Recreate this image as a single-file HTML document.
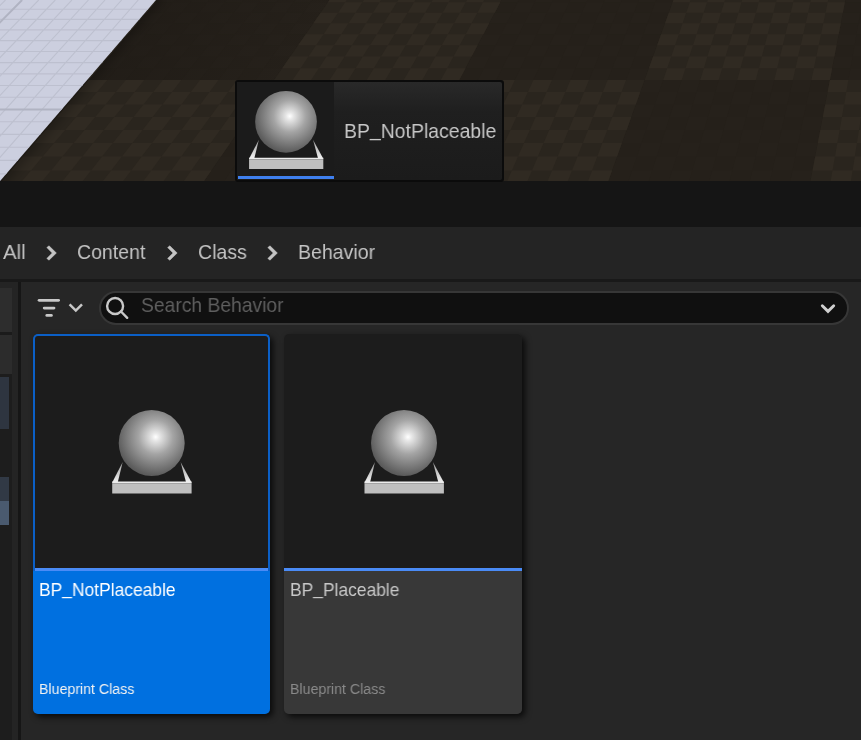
<!DOCTYPE html>
<html><head><meta charset="utf-8">
<style>
*{margin:0;padding:0;box-sizing:border-box}
html,body{width:861px;height:740px;overflow:hidden;background:#262626;font-family:"Liberation Sans",sans-serif}
.a{position:absolute}
#vp{position:absolute;left:0;top:0;width:861px;height:181px;overflow:hidden}
.t{position:absolute;white-space:nowrap;line-height:1;transform-origin:0 0;will-change:transform}
</style></head><body>
<svg id="vp" width="861" height="181" viewBox="0 0 861 181">
<rect width="861" height="181" fill="#25201a"/>
<path d="M-26.9,104.4 L-8.0,104.4 L3.4,92.1 L-15.3,92.1ZM-19.7,117.0 L-0.5,117.0 L10.9,104.4 L-8.0,104.4ZM3.4,92.1 L22.2,92.1 L33.2,80.0 L14.6,80.0ZM-12.3,129.9 L7.1,129.9 L18.6,117.0 L-0.5,117.0ZM10.9,104.4 L29.9,104.4 L40.9,92.1 L22.2,92.1ZM-29.1,170.4 L-9.0,170.4 L3.1,156.6 L-16.7,156.6ZM-4.7,143.1 L14.9,143.1 L26.5,129.9 L7.1,129.9ZM18.6,117.0 L37.8,117.0 L48.8,104.4 L29.9,104.4ZM40.9,92.1 L59.6,92.1 L70.2,80.0 L51.7,80.0ZM-21.4,184.6 L-1.2,184.6 L11.0,170.4 L-9.0,170.4ZM3.1,156.6 L22.9,156.6 L34.5,143.1 L14.9,143.1ZM26.5,129.9 L45.8,129.9 L56.9,117.0 L37.8,117.0ZM48.8,104.4 L67.8,104.4 L78.4,92.1 L59.6,92.1ZM211.4,170.4 L231.4,170.4 L240.7,156.6 L220.9,156.6ZM230.3,143.1 L249.9,143.1 L258.8,129.9 L239.4,129.9ZM248.4,117.0 L267.5,117.0 L276.1,104.4 L257.1,104.4ZM265.7,92.1 L284.4,92.1 L292.6,80.0 L274.0,80.0ZM221.8,184.6 L242.1,184.6 L251.4,170.4 L231.4,170.4ZM240.7,156.6 L260.6,156.6 L269.5,143.1 L249.9,143.1ZM258.8,129.9 L278.2,129.9 L286.7,117.0 L267.5,117.0ZM276.1,104.4 L295.0,104.4 L303.1,92.1 L284.4,92.1ZM251.4,170.4 L271.5,170.4 L280.4,156.6 L260.6,156.6ZM269.5,143.1 L289.0,143.1 L297.5,129.9 L278.2,129.9ZM286.7,117.0 L305.8,117.0 L313.9,104.4 L295.0,104.4ZM303.1,92.1 L321.9,92.1 L329.6,80.0 L311.1,80.0ZM262.4,184.6 L282.7,184.6 L291.5,170.4 L271.5,170.4ZM280.4,156.6 L300.2,156.6 L308.6,143.1 L289.0,143.1ZM297.5,129.9 L316.9,129.9 L325.0,117.0 L305.8,117.0ZM313.9,104.4 L332.9,104.4 L340.6,92.1 L321.9,92.1ZM291.5,170.4 L311.6,170.4 L320.0,156.6 L300.2,156.6ZM308.6,143.1 L328.2,143.1 L336.2,129.9 L316.9,129.9ZM325.0,117.0 L344.1,117.0 L351.8,104.4 L332.9,104.4ZM340.6,92.1 L359.3,92.1 L366.7,80.0 L348.2,80.0ZM302.9,184.6 L323.2,184.6 L331.6,170.4 L311.6,170.4ZM320.0,156.6 L339.8,156.6 L347.8,143.1 L328.2,143.1ZM336.2,129.9 L355.6,129.9 L363.3,117.0 L344.1,117.0ZM351.8,104.4 L370.7,104.4 L378.1,92.1 L359.3,92.1ZM331.6,170.4 L351.6,170.4 L359.6,156.6 L339.8,156.6ZM347.8,143.1 L367.4,143.1 L375.0,129.9 L355.6,129.9ZM363.3,117.0 L382.4,117.0 L389.7,104.4 L370.7,104.4ZM378.1,92.1 L396.8,92.1 L403.7,80.0 L385.2,80.0ZM343.5,184.6 L363.8,184.6 L371.7,170.4 L351.6,170.4ZM359.6,156.6 L379.4,156.6 L386.9,143.1 L367.4,143.1ZM375.0,129.9 L394.3,129.9 L401.6,117.0 L382.4,117.0ZM389.7,104.4 L408.6,104.4 L415.5,92.1 L396.8,92.1ZM371.7,170.4 L391.7,170.4 L399.2,156.6 L379.4,156.6ZM386.9,143.1 L406.5,143.1 L413.7,129.9 L394.3,129.9ZM401.6,117.0 L420.7,117.0 L427.5,104.4 L408.6,104.4ZM415.5,92.1 L434.2,92.1 L440.8,80.0 L422.3,80.0ZM384.0,184.6 L404.3,184.6 L411.7,170.4 L391.7,170.4ZM399.2,156.6 L419.0,156.6 L426.1,143.1 L406.5,143.1ZM413.7,129.9 L433.1,129.9 L439.8,117.0 L420.7,117.0ZM427.5,104.4 L446.5,104.4 L453.0,92.1 L434.2,92.1ZM612.1,170.4 L632.2,170.4 L636.9,156.6 L617.1,156.6ZM621.9,143.1 L641.5,143.1 L646.0,129.9 L626.7,129.9ZM631.3,117.0 L650.5,117.0 L654.8,104.4 L635.8,104.4ZM640.3,92.1 L659.0,92.1 L663.2,80.0 L644.6,80.0ZM627.3,184.6 L647.6,184.6 L652.2,170.4 L632.2,170.4ZM636.9,156.6 L656.7,156.6 L661.1,143.1 L641.5,143.1ZM646.0,129.9 L665.4,129.9 L669.6,117.0 L650.5,117.0ZM654.8,104.4 L673.7,104.4 L677.7,92.1 L659.0,92.1ZM652.2,170.4 L672.2,170.4 L676.5,156.6 L656.7,156.6ZM661.1,143.1 L680.7,143.1 L684.8,129.9 L665.4,129.9ZM669.6,117.0 L688.8,117.0 L692.7,104.4 L673.7,104.4ZM677.7,92.1 L696.5,92.1 L700.2,80.0 L681.7,80.0ZM667.9,184.6 L688.1,184.6 L692.3,170.4 L672.2,170.4ZM676.5,156.6 L696.3,156.6 L700.3,143.1 L680.7,143.1ZM684.8,129.9 L704.1,129.9 L707.9,117.0 L688.8,117.0ZM692.7,104.4 L711.6,104.4 L715.2,92.1 L696.5,92.1ZM692.3,170.4 L712.3,170.4 L716.1,156.6 L696.3,156.6ZM700.3,143.1 L719.8,143.1 L723.5,129.9 L704.1,129.9ZM707.9,117.0 L727.0,117.0 L730.5,104.4 L711.6,104.4ZM715.2,92.1 L733.9,92.1 L737.3,80.0 L718.7,80.0ZM708.4,184.6 L728.7,184.6 L732.3,170.4 L712.3,170.4ZM716.1,156.6 L735.9,156.6 L739.4,143.1 L719.8,143.1ZM723.5,129.9 L742.8,129.9 L746.2,117.0 L727.0,117.0ZM730.5,104.4 L749.5,104.4 L752.7,92.1 L733.9,92.1ZM732.3,170.4 L752.4,170.4 L755.7,156.6 L735.9,156.6ZM739.4,143.1 L759.0,143.1 L762.2,129.9 L742.8,129.9ZM746.2,117.0 L765.3,117.0 L768.4,104.4 L749.5,104.4ZM752.7,92.1 L771.4,92.1 L774.3,80.0 L755.8,80.0ZM748.9,184.6 L769.2,184.6 L772.4,170.4 L752.4,170.4ZM755.7,156.6 L775.5,156.6 L778.6,143.1 L759.0,143.1ZM762.2,129.9 L781.6,129.9 L784.5,117.0 L765.3,117.0ZM768.4,104.4 L787.3,104.4 L790.1,92.1 L771.4,92.1ZM772.4,170.4 L792.5,170.4 L795.3,156.6 L775.5,156.6ZM778.6,143.1 L798.2,143.1 L800.9,129.9 L781.6,129.9ZM784.5,117.0 L803.6,117.0 L806.3,104.4 L787.3,104.4ZM790.1,92.1 L808.9,92.1 L811.4,80.0 L792.9,80.0ZM789.5,184.6 L809.8,184.6 L812.5,170.4 L792.5,170.4ZM795.3,156.6 L815.2,156.6 L817.8,143.1 L798.2,143.1ZM800.9,129.9 L820.3,129.9 L822.8,117.0 L803.6,117.0ZM806.3,104.4 L825.2,104.4 L827.6,92.1 L808.9,92.1ZM98.9,68.2 L117.2,68.2 L127.0,56.6 L108.9,56.6ZM118.6,45.3 L136.6,45.3 L145.9,34.2 L128.1,34.2ZM137.5,23.3 L155.1,23.3 L164.1,12.7 L146.6,12.7ZM155.6,2.2 L172.9,2.2 L181.5,-8.0 L164.4,-8.0ZM107.3,80.0 L125.8,80.0 L135.6,68.2 L117.2,68.2ZM127.0,56.6 L145.1,56.6 L154.5,45.3 L136.6,45.3ZM145.9,34.2 L163.7,34.2 L172.7,23.3 L155.1,23.3ZM164.1,12.7 L181.5,12.7 L190.1,2.2 L172.9,2.2ZM135.6,68.2 L153.9,68.2 L163.3,56.6 L145.1,56.6ZM154.5,45.3 L172.5,45.3 L181.4,34.2 L163.7,34.2ZM172.7,23.3 L190.2,23.3 L198.9,12.7 L181.5,12.7ZM190.1,2.2 L207.3,2.2 L215.6,-8.0 L198.5,-8.0ZM144.3,80.0 L162.9,80.0 L172.2,68.2 L153.9,68.2ZM163.3,56.6 L181.4,56.6 L190.4,45.3 L172.5,45.3ZM181.4,34.2 L199.2,34.2 L207.8,23.3 L190.2,23.3ZM198.9,12.7 L216.3,12.7 L224.5,2.2 L207.3,2.2ZM172.2,68.2 L190.6,68.2 L199.6,56.6 L181.4,56.6ZM190.4,45.3 L208.4,45.3 L217.0,34.2 L199.2,34.2ZM207.8,23.3 L225.4,23.3 L233.7,12.7 L216.3,12.7ZM224.5,2.2 L241.8,2.2 L249.7,-8.0 L232.7,-8.0ZM181.4,80.0 L199.9,80.0 L208.9,68.2 L190.6,68.2ZM199.6,56.6 L217.7,56.6 L226.3,45.3 L208.4,45.3ZM217.0,34.2 L234.7,34.2 L243.0,23.3 L225.4,23.3ZM233.7,12.7 L251.1,12.7 L259.0,2.2 L241.8,2.2ZM208.9,68.2 L227.2,68.2 L235.8,56.6 L217.7,56.6ZM226.3,45.3 L244.3,45.3 L252.5,34.2 L234.7,34.2ZM243.0,23.3 L260.6,23.3 L268.5,12.7 L251.1,12.7ZM259.0,2.2 L276.2,2.2 L283.8,-8.0 L266.8,-8.0ZM218.5,80.0 L237.0,80.0 L245.6,68.2 L227.2,68.2ZM235.8,56.6 L254.0,56.6 L262.2,45.3 L244.3,45.3ZM252.5,34.2 L270.3,34.2 L278.2,23.3 L260.6,23.3ZM268.5,12.7 L285.9,12.7 L293.5,2.2 L276.2,2.2ZM245.6,68.2 L263.9,68.2 L272.1,56.6 L254.0,56.6ZM262.2,45.3 L280.2,45.3 L288.0,34.2 L270.3,34.2ZM278.2,23.3 L295.7,23.3 L303.3,12.7 L285.9,12.7ZM293.5,2.2 L310.7,2.2 L318.0,-8.0 L300.9,-8.0ZM255.5,80.0 L274.0,80.0 L282.2,68.2 L263.9,68.2ZM272.1,56.6 L290.3,56.6 L298.1,45.3 L280.2,45.3ZM288.0,34.2 L305.8,34.2 L313.3,23.3 L295.7,23.3ZM303.3,12.7 L320.7,12.7 L327.9,2.2 L310.7,2.2ZM465.6,68.2 L483.9,68.2 L489.8,56.6 L471.6,56.6ZM477.6,45.3 L495.6,45.3 L501.2,34.2 L483.4,34.2ZM489.2,23.3 L506.7,23.3 L512.2,12.7 L494.8,12.7ZM500.3,2.2 L517.5,2.2 L522.7,-8.0 L505.6,-8.0ZM477.9,80.0 L496.4,80.0 L502.2,68.2 L483.9,68.2ZM489.8,56.6 L507.9,56.6 L513.5,45.3 L495.6,45.3ZM501.2,34.2 L519.0,34.2 L524.3,23.3 L506.7,23.3ZM512.2,12.7 L529.6,12.7 L534.7,2.2 L517.5,2.2ZM502.2,68.2 L520.5,68.2 L526.1,56.6 L507.9,56.6ZM513.5,45.3 L531.5,45.3 L536.7,34.2 L519.0,34.2ZM524.3,23.3 L541.9,23.3 L547.0,12.7 L529.6,12.7ZM534.7,2.2 L552.0,2.2 L556.8,-8.0 L539.8,-8.0ZM514.9,80.0 L533.4,80.0 L538.9,68.2 L520.5,68.2ZM526.1,56.6 L544.2,56.6 L549.4,45.3 L531.5,45.3ZM536.7,34.2 L554.5,34.2 L559.5,23.3 L541.9,23.3ZM547.0,12.7 L564.4,12.7 L569.2,2.2 L552.0,2.2ZM538.9,68.2 L557.2,68.2 L562.3,56.6 L544.2,56.6ZM549.4,45.3 L567.4,45.3 L572.3,34.2 L554.5,34.2ZM559.5,23.3 L577.1,23.3 L581.8,12.7 L564.4,12.7ZM569.2,2.2 L586.4,2.2 L591.0,-8.0 L573.9,-8.0ZM552.0,80.0 L570.5,80.0 L575.5,68.2 L557.2,68.2ZM562.3,56.6 L580.5,56.6 L585.3,45.3 L567.4,45.3ZM572.3,34.2 L590.0,34.2 L594.7,23.3 L577.1,23.3ZM581.8,12.7 L599.2,12.7 L603.7,2.2 L586.4,2.2ZM575.5,68.2 L593.9,68.2 L598.6,56.6 L580.5,56.6ZM585.3,45.3 L603.3,45.3 L607.8,34.2 L590.0,34.2ZM594.7,23.3 L612.3,23.3 L616.6,12.7 L599.2,12.7ZM603.7,2.2 L620.9,2.2 L625.1,-8.0 L608.0,-8.0ZM589.0,80.0 L607.6,80.0 L612.2,68.2 L593.9,68.2ZM598.6,56.6 L616.8,56.6 L621.2,45.3 L603.3,45.3ZM607.8,34.2 L625.6,34.2 L629.8,23.3 L612.3,23.3ZM616.6,12.7 L634.0,12.7 L638.1,2.2 L620.9,2.2ZM612.2,68.2 L630.5,68.2 L634.9,56.6 L616.8,56.6ZM621.2,45.3 L639.2,45.3 L643.3,34.2 L625.6,34.2ZM629.8,23.3 L647.4,23.3 L651.4,12.7 L634.0,12.7ZM638.1,2.2 L655.3,2.2 L659.2,-8.0 L642.1,-8.0ZM626.1,80.0 L644.6,80.0 L648.9,68.2 L630.5,68.2ZM634.9,56.6 L653.0,56.6 L657.1,45.3 L639.2,45.3ZM643.3,34.2 L661.1,34.2 L665.0,23.3 L647.4,23.3ZM651.4,12.7 L668.8,12.7 L672.6,2.2 L655.3,2.2ZM832.2,68.2 L850.5,68.2 L852.6,56.6 L834.4,56.6ZM836.6,45.3 L854.6,45.3 L856.5,34.2 L838.7,34.2ZM840.8,23.3 L858.4,23.3 L860.3,12.7 L842.9,12.7ZM844.9,2.2 L862.1,2.2 L863.9,-8.0 L846.9,-8.0ZM848.4,80.0 L867.0,80.0 L868.9,68.2 L850.5,68.2ZM852.6,56.6 L870.7,56.6 L872.5,45.3 L854.6,45.3ZM856.5,34.2 L874.3,34.2 L876.0,23.3 L858.4,23.3ZM860.3,12.7 L877.7,12.7 L879.4,2.2 L862.1,2.2Z" fill="#26211b"/>
<path d="M-26.3,213.9 L181.3,213.9 L274.0,80.0 L88.8,80.0ZM388.9,213.9 L596.5,213.9 L644.6,80.0 L459.3,80.0ZM804.1,213.9 L1011.7,213.9 L1015.2,80.0 L829.9,80.0ZM-96.5,80.0 L88.8,80.0 L181.5,-27.9 L14.2,-27.9ZM274.0,80.0 L459.3,80.0 L516.1,-27.9 L348.8,-27.9ZM644.6,80.0 L829.9,80.0 L850.7,-27.9 L683.4,-27.9ZM1015.2,80.0 L1200.5,80.0 L1185.3,-27.9 L1018.0,-27.9ZM181.5,-27.9 L348.8,-27.9 L410.3,-116.6 L257.8,-116.6ZM516.1,-27.9 L683.4,-27.9 L715.3,-116.6 L562.8,-116.6ZM850.7,-27.9 L1018.0,-27.9 L1020.3,-116.6 L867.8,-116.6Z" fill="#2a251e"/>
<path d="M11.0,170.4 L31.0,170.4 L42.7,156.6 L22.9,156.6ZM34.5,143.1 L54.1,143.1 L65.2,129.9 L45.8,129.9ZM56.9,117.0 L76.1,117.0 L86.7,104.4 L67.8,104.4ZM78.4,92.1 L97.1,92.1 L107.3,80.0 L88.8,80.0ZM19.1,184.6 L39.4,184.6 L51.1,170.4 L31.0,170.4ZM42.7,156.6 L62.5,156.6 L73.6,143.1 L54.1,143.1ZM65.2,129.9 L84.5,129.9 L95.2,117.0 L76.1,117.0ZM86.7,104.4 L105.6,104.4 L115.8,92.1 L97.1,92.1ZM51.1,170.4 L71.1,170.4 L82.3,156.6 L62.5,156.6ZM73.6,143.1 L93.2,143.1 L103.9,129.9 L84.5,129.9ZM95.2,117.0 L114.3,117.0 L124.6,104.4 L105.6,104.4ZM115.8,92.1 L134.6,92.1 L144.3,80.0 L125.8,80.0ZM59.7,184.6 L79.9,184.6 L91.1,170.4 L71.1,170.4ZM82.3,156.6 L102.1,156.6 L112.8,143.1 L93.2,143.1ZM103.9,129.9 L123.3,129.9 L133.5,117.0 L114.3,117.0ZM124.6,104.4 L143.5,104.4 L153.3,92.1 L134.6,92.1ZM91.1,170.4 L111.2,170.4 L121.9,156.6 L102.1,156.6ZM112.8,143.1 L132.4,143.1 L142.6,129.9 L123.3,129.9ZM133.5,117.0 L152.6,117.0 L162.4,104.4 L143.5,104.4ZM153.3,92.1 L172.0,92.1 L181.4,80.0 L162.9,80.0ZM100.2,184.6 L120.5,184.6 L131.2,170.4 L111.2,170.4ZM121.9,156.6 L141.7,156.6 L152.0,143.1 L132.4,143.1ZM142.6,129.9 L162.0,129.9 L171.8,117.0 L152.6,117.0ZM162.4,104.4 L181.4,104.4 L190.8,92.1 L172.0,92.1ZM131.2,170.4 L151.3,170.4 L161.5,156.6 L141.7,156.6ZM152.0,143.1 L171.5,143.1 L181.4,129.9 L162.0,129.9ZM171.8,117.0 L190.9,117.0 L200.3,104.4 L181.4,104.4ZM190.8,92.1 L209.5,92.1 L218.5,80.0 L199.9,80.0ZM140.8,184.6 L161.0,184.6 L171.3,170.4 L151.3,170.4ZM161.5,156.6 L181.3,156.6 L191.1,143.1 L171.5,143.1ZM181.4,129.9 L200.7,129.9 L210.1,117.0 L190.9,117.0ZM200.3,104.4 L219.2,104.4 L228.2,92.1 L209.5,92.1ZM171.3,170.4 L191.3,170.4 L201.1,156.6 L181.3,156.6ZM191.1,143.1 L210.7,143.1 L220.1,129.9 L200.7,129.9ZM210.1,117.0 L229.2,117.0 L238.2,104.4 L219.2,104.4ZM228.2,92.1 L246.9,92.1 L255.5,80.0 L237.0,80.0ZM181.3,184.6 L201.6,184.6 L211.4,170.4 L191.3,170.4ZM201.1,156.6 L220.9,156.6 L230.3,143.1 L210.7,143.1ZM220.1,129.9 L239.4,129.9 L248.4,117.0 L229.2,117.0ZM238.2,104.4 L257.1,104.4 L265.7,92.1 L246.9,92.1ZM411.7,170.4 L431.8,170.4 L438.8,156.6 L419.0,156.6ZM426.1,143.1 L445.7,143.1 L452.4,129.9 L433.1,129.9ZM439.8,117.0 L459.0,117.0 L465.4,104.4 L446.5,104.4ZM453.0,92.1 L471.7,92.1 L477.9,80.0 L459.3,80.0ZM424.6,184.6 L444.9,184.6 L451.8,170.4 L431.8,170.4ZM438.8,156.6 L458.6,156.6 L465.3,143.1 L445.7,143.1ZM452.4,129.9 L471.8,129.9 L478.1,117.0 L459.0,117.0ZM465.4,104.4 L484.4,104.4 L490.4,92.1 L471.7,92.1ZM451.8,170.4 L471.9,170.4 L478.4,156.6 L458.6,156.6ZM465.3,143.1 L484.9,143.1 L491.1,129.9 L471.8,129.9ZM478.1,117.0 L497.3,117.0 L503.3,104.4 L484.4,104.4ZM490.4,92.1 L509.2,92.1 L514.9,80.0 L496.4,80.0ZM465.1,184.6 L485.4,184.6 L491.9,170.4 L471.9,170.4ZM478.4,156.6 L498.2,156.6 L504.4,143.1 L484.9,143.1ZM491.1,129.9 L510.5,129.9 L516.4,117.0 L497.3,117.0ZM503.3,104.4 L522.2,104.4 L527.9,92.1 L509.2,92.1ZM491.9,170.4 L511.9,170.4 L518.0,156.6 L498.2,156.6ZM504.4,143.1 L524.0,143.1 L529.9,129.9 L510.5,129.9ZM516.4,117.0 L535.6,117.0 L541.2,104.4 L522.2,104.4ZM527.9,92.1 L546.6,92.1 L552.0,80.0 L533.4,80.0ZM505.7,184.6 L525.9,184.6 L532.0,170.4 L511.9,170.4ZM518.0,156.6 L537.9,156.6 L543.6,143.1 L524.0,143.1ZM529.9,129.9 L549.2,129.9 L554.7,117.0 L535.6,117.0ZM541.2,104.4 L560.1,104.4 L565.4,92.1 L546.6,92.1ZM532.0,170.4 L552.0,170.4 L557.7,156.6 L537.9,156.6ZM543.6,143.1 L563.2,143.1 L568.6,129.9 L549.2,129.9ZM554.7,117.0 L573.9,117.0 L579.0,104.4 L560.1,104.4ZM565.4,92.1 L584.1,92.1 L589.0,80.0 L570.5,80.0ZM546.2,184.6 L566.5,184.6 L572.0,170.4 L552.0,170.4ZM557.7,156.6 L577.5,156.6 L582.8,143.1 L563.2,143.1ZM568.6,129.9 L588.0,129.9 L593.0,117.0 L573.9,117.0ZM579.0,104.4 L598.0,104.4 L602.8,92.1 L584.1,92.1ZM572.0,170.4 L592.1,170.4 L597.3,156.6 L577.5,156.6ZM582.8,143.1 L602.3,143.1 L607.3,129.9 L588.0,129.9ZM593.0,117.0 L612.2,117.0 L616.9,104.4 L598.0,104.4ZM602.8,92.1 L621.6,92.1 L626.1,80.0 L607.6,80.0ZM586.8,184.6 L607.0,184.6 L612.1,170.4 L592.1,170.4ZM597.3,156.6 L617.1,156.6 L621.9,143.1 L602.3,143.1ZM607.3,129.9 L626.7,129.9 L631.3,117.0 L612.2,117.0ZM616.9,104.4 L635.8,104.4 L640.3,92.1 L621.6,92.1ZM812.5,170.4 L832.5,170.4 L835.0,156.6 L815.2,156.6ZM817.8,143.1 L837.3,143.1 L839.7,129.9 L820.3,129.9ZM822.8,117.0 L841.9,117.0 L844.1,104.4 L825.2,104.4ZM827.6,92.1 L846.3,92.1 L848.4,80.0 L829.9,80.0ZM830.0,184.6 L850.3,184.6 L852.6,170.4 L832.5,170.4ZM835.0,156.6 L854.8,156.6 L856.9,143.1 L837.3,143.1ZM839.7,129.9 L859.0,129.9 L861.1,117.0 L841.9,117.0ZM844.1,104.4 L863.1,104.4 L865.0,92.1 L846.3,92.1ZM852.6,170.4 L872.6,170.4 L874.6,156.6 L854.8,156.6ZM856.9,143.1 L876.5,143.1 L878.4,129.9 L859.0,129.9ZM-16.7,2.2 L0.5,2.2 L10.9,-8.0 L-6.2,-8.0ZM-10.0,12.7 L7.4,12.7 L17.8,2.2 L0.5,2.2ZM-25.0,45.3 L-7.0,45.3 L3.8,34.2 L-14.0,34.2ZM-3.2,23.3 L14.4,23.3 L24.8,12.7 L7.4,12.7ZM17.8,2.2 L35.0,2.2 L45.0,-8.0 L27.9,-8.0ZM-18.1,56.6 L0.0,56.6 L10.9,45.3 L-7.0,45.3ZM3.8,34.2 L21.6,34.2 L32.0,23.3 L14.4,23.3ZM24.8,12.7 L42.2,12.7 L52.2,2.2 L35.0,2.2ZM-11.1,68.2 L7.3,68.2 L18.2,56.6 L0.0,56.6ZM10.9,45.3 L28.9,45.3 L39.3,34.2 L21.6,34.2ZM32.0,23.3 L49.6,23.3 L59.6,12.7 L42.2,12.7ZM52.2,2.2 L69.5,2.2 L79.1,-8.0 L62.0,-8.0ZM-3.9,80.0 L14.6,80.0 L25.6,68.2 L7.3,68.2ZM18.2,56.6 L36.3,56.6 L46.8,45.3 L28.9,45.3ZM39.3,34.2 L57.1,34.2 L67.2,23.3 L49.6,23.3ZM59.6,12.7 L77.0,12.7 L86.7,2.2 L69.5,2.2ZM25.6,68.2 L43.9,68.2 L54.4,56.6 L36.3,56.6ZM46.8,45.3 L64.8,45.3 L74.8,34.2 L57.1,34.2ZM67.2,23.3 L84.7,23.3 L94.4,12.7 L77.0,12.7ZM86.7,2.2 L103.9,2.2 L113.2,-8.0 L96.2,-8.0ZM33.2,80.0 L51.7,80.0 L62.3,68.2 L43.9,68.2ZM54.4,56.6 L72.6,56.6 L82.7,45.3 L64.8,45.3ZM74.8,34.2 L92.6,34.2 L102.3,23.3 L84.7,23.3ZM94.4,12.7 L111.8,12.7 L121.2,2.2 L103.9,2.2ZM62.3,68.2 L80.6,68.2 L90.7,56.6 L72.6,56.6ZM82.7,45.3 L100.7,45.3 L110.4,34.2 L92.6,34.2ZM102.3,23.3 L119.9,23.3 L129.2,12.7 L111.8,12.7ZM121.2,2.2 L138.4,2.2 L147.4,-8.0 L130.3,-8.0ZM70.2,80.0 L88.8,80.0 L98.9,68.2 L80.6,68.2ZM90.7,56.6 L108.9,56.6 L118.6,45.3 L100.7,45.3ZM110.4,34.2 L128.1,34.2 L137.5,23.3 L119.9,23.3ZM129.2,12.7 L146.6,12.7 L155.6,2.2 L138.4,2.2ZM282.2,68.2 L300.6,68.2 L308.4,56.6 L290.3,56.6ZM298.1,45.3 L316.1,45.3 L323.6,34.2 L305.8,34.2ZM313.3,23.3 L330.9,23.3 L338.1,12.7 L320.7,12.7ZM327.9,2.2 L345.2,2.2 L352.1,-8.0 L335.0,-8.0ZM292.6,80.0 L311.1,80.0 L318.9,68.2 L300.6,68.2ZM308.4,56.6 L326.5,56.6 L334.0,45.3 L316.1,45.3ZM323.6,34.2 L341.3,34.2 L348.5,23.3 L330.9,23.3ZM338.1,12.7 L355.5,12.7 L362.4,2.2 L345.2,2.2ZM318.9,68.2 L337.2,68.2 L344.7,56.6 L326.5,56.6ZM334.0,45.3 L352.0,45.3 L359.1,34.2 L341.3,34.2ZM348.5,23.3 L366.1,23.3 L372.9,12.7 L355.5,12.7ZM362.4,2.2 L379.6,2.2 L386.2,-8.0 L369.2,-8.0ZM329.6,80.0 L348.2,80.0 L355.6,68.2 L337.2,68.2ZM344.7,56.6 L362.8,56.6 L369.9,45.3 L352.0,45.3ZM359.1,34.2 L376.9,34.2 L383.7,23.3 L366.1,23.3ZM372.9,12.7 L390.3,12.7 L396.9,2.2 L379.6,2.2ZM355.6,68.2 L373.9,68.2 L380.9,56.6 L362.8,56.6ZM369.9,45.3 L387.9,45.3 L394.6,34.2 L376.9,34.2ZM383.7,23.3 L401.2,23.3 L407.7,12.7 L390.3,12.7ZM396.9,2.2 L414.1,2.2 L420.3,-8.0 L403.3,-8.0ZM366.7,80.0 L385.2,80.0 L392.2,68.2 L373.9,68.2ZM380.9,56.6 L399.1,56.6 L405.8,45.3 L387.9,45.3ZM394.6,34.2 L412.4,34.2 L418.8,23.3 L401.2,23.3ZM407.7,12.7 L425.1,12.7 L431.3,2.2 L414.1,2.2ZM392.2,68.2 L410.6,68.2 L417.2,56.6 L399.1,56.6ZM405.8,45.3 L423.8,45.3 L430.1,34.2 L412.4,34.2ZM418.8,23.3 L436.4,23.3 L442.6,12.7 L425.1,12.7ZM431.3,2.2 L448.6,2.2 L454.5,-8.0 L437.4,-8.0ZM403.7,80.0 L422.3,80.0 L428.9,68.2 L410.6,68.2ZM417.2,56.6 L435.4,56.6 L441.7,45.3 L423.8,45.3ZM430.1,34.2 L447.9,34.2 L454.0,23.3 L436.4,23.3ZM442.6,12.7 L460.0,12.7 L465.8,2.2 L448.6,2.2ZM428.9,68.2 L447.2,68.2 L453.5,56.6 L435.4,56.6ZM441.7,45.3 L459.7,45.3 L465.7,34.2 L447.9,34.2ZM454.0,23.3 L471.6,23.3 L477.4,12.7 L460.0,12.7ZM465.8,2.2 L483.0,2.2 L488.6,-8.0 L471.5,-8.0ZM440.8,80.0 L459.3,80.0 L465.6,68.2 L447.2,68.2ZM453.5,56.6 L471.6,56.6 L477.6,45.3 L459.7,45.3ZM465.7,34.2 L483.4,34.2 L489.2,23.3 L471.6,23.3ZM477.4,12.7 L494.8,12.7 L500.3,2.2 L483.0,2.2ZM648.9,68.2 L667.2,68.2 L671.2,56.6 L653.0,56.6ZM657.1,45.3 L675.1,45.3 L678.9,34.2 L661.1,34.2ZM665.0,23.3 L682.6,23.3 L686.2,12.7 L668.8,12.7ZM672.6,2.2 L689.8,2.2 L693.3,-8.0 L676.3,-8.0ZM663.2,80.0 L681.7,80.0 L685.5,68.2 L667.2,68.2ZM671.2,56.6 L689.3,56.6 L693.0,45.3 L675.1,45.3ZM678.9,34.2 L696.6,34.2 L700.2,23.3 L682.6,23.3ZM686.2,12.7 L703.6,12.7 L707.0,2.2 L689.8,2.2ZM685.5,68.2 L703.9,68.2 L707.4,56.6 L689.3,56.6ZM693.0,45.3 L711.0,45.3 L714.4,34.2 L696.6,34.2ZM700.2,23.3 L717.8,23.3 L721.0,12.7 L703.6,12.7ZM707.0,2.2 L724.3,2.2 L727.4,-8.0 L710.4,-8.0ZM700.2,80.0 L718.7,80.0 L722.2,68.2 L703.9,68.2ZM707.4,56.6 L725.6,56.6 L728.9,45.3 L711.0,45.3ZM714.4,34.2 L732.2,34.2 L735.3,23.3 L717.8,23.3ZM721.0,12.7 L738.5,12.7 L741.5,2.2 L724.3,2.2ZM722.2,68.2 L740.5,68.2 L743.7,56.6 L725.6,56.6ZM728.9,45.3 L746.9,45.3 L749.9,34.2 L732.2,34.2ZM735.3,23.3 L752.9,23.3 L755.9,12.7 L738.5,12.7ZM741.5,2.2 L758.7,2.2 L761.6,-8.0 L744.5,-8.0ZM737.3,80.0 L755.8,80.0 L758.9,68.2 L740.5,68.2ZM743.7,56.6 L761.9,56.6 L764.8,45.3 L746.9,45.3ZM749.9,34.2 L767.7,34.2 L770.5,23.3 L752.9,23.3ZM755.9,12.7 L773.3,12.7 L776.0,2.2 L758.7,2.2ZM758.9,68.2 L777.2,68.2 L780.0,56.6 L761.9,56.6ZM764.8,45.3 L782.8,45.3 L785.4,34.2 L767.7,34.2ZM770.5,23.3 L788.1,23.3 L790.7,12.7 L773.3,12.7ZM776.0,2.2 L793.2,2.2 L795.7,-8.0 L778.6,-8.0ZM774.3,80.0 L792.9,80.0 L795.5,68.2 L777.2,68.2ZM780.0,56.6 L798.1,56.6 L800.7,45.3 L782.8,45.3ZM785.4,34.2 L803.2,34.2 L805.7,23.3 L788.1,23.3ZM790.7,12.7 L808.1,12.7 L810.4,2.2 L793.2,2.2ZM795.5,68.2 L813.9,68.2 L816.3,56.6 L798.1,56.6ZM800.7,45.3 L818.7,45.3 L821.0,34.2 L803.2,34.2ZM805.7,23.3 L823.3,23.3 L825.5,12.7 L808.1,12.7ZM810.4,2.2 L827.7,2.2 L829.8,-8.0 L812.7,-8.0ZM811.4,80.0 L829.9,80.0 L832.2,68.2 L813.9,68.2ZM816.3,56.6 L834.4,56.6 L836.6,45.3 L818.7,45.3ZM821.0,34.2 L838.7,34.2 L840.8,23.3 L823.3,23.3ZM825.5,12.7 L842.9,12.7 L844.9,2.2 L827.7,2.2Z" fill="#302a22"/>
<defs><linearGradient id="sg" gradientUnits="userSpaceOnUse" x1="150" y1="0" x2="300" y2="80"><stop offset="0" stop-color="#1a1612" stop-opacity="0.35"/><stop offset="1" stop-color="#1a1612" stop-opacity="0"/></linearGradient></defs>
<path d="M88.8,80.0 L274.0,80.0 L362.0,-47.0 L197.9,-47.0Z" fill="url(#sg)"/>
<defs><filter id="bl" x="-50%" y="-50%" width="200%" height="200%"><feGaussianBlur stdDeviation="4"/></filter></defs><path d="M159,-5 L-3,186" stroke="#000" stroke-opacity="0.22" stroke-width="12" fill="none" filter="url(#bl)"/>
<path d="M0,0 L156.0,0 L0.1,181 L0,181Z" fill="#cccfdf"/>
<defs><clipPath id="bc"><path d="M0,0 L156.0,0 L0.1,181 L0,181Z"/></clipPath></defs>
<g clip-path="url(#bc)"><path d="M138.3,0 L-20.7,181M121.7,0 L-40.2,181M105.1,0 L-59.7,181M88.5,0 L-79.2,181M71.9,0 L-98.7,181M55.3,0 L-118.3,181M38.7,0 L-137.8,181M5.5,0 L-176.8,181M-11.1,0 L-196.3,181M-27.7,0 L-215.8,181M-44.3,0 L-235.3,181M-60.8,0 L-254.8,181M-77.4,0 L-274.3,181M-94.0,0 L-293.8,181M-110.6,0 L-313.3,181M-127.2,0 L-332.8,181M-143.8,0 L-352.3,181M-160.4,0 L-371.9,181M-177.0,0 L-391.4,181M-193.6,0 L-410.9,181M0,9.2 L200,9.2M0,19.4 L200,19.4M0,29.9 L200,29.9M0,40.6 L200,40.6M0,51.5 L200,51.5M0,62.6 L200,62.6M0,73.9 L200,73.9M0,85.5 L200,85.5M0,97.3 L200,97.3M0,121.7 L200,121.7M0,134.4 L200,134.4M0,147.2 L200,147.2M0,160.4 L200,160.4M0,173.9 L200,173.9" stroke="#bdc0cf" stroke-width="1.1" fill="none"/><path d="M22.1,0 L-157.3,181M0,109.4 L200,109.4" stroke="#b0b3c2" stroke-width="2" fill="none"/></g>
</svg>
<!-- tooltip -->
<div class="a" style="left:235px;top:80px;width:269px;height:101.5px;background:#0b0b0b;border-radius:3px;z-index:2"></div>
<div class="a" style="z-index:2;left:334px;top:82px;width:168px;height:97.5px;background:linear-gradient(#292929 0%,#1f1f1f 30%,#1b1b1b 100%);border-radius:0 2px 2px 0"></div>
<div class="a" style="z-index:2;left:236.5px;top:82px;width:97.5px;height:97.5px;background:#1b1b1b"></div>
<div class="a" style="z-index:2;left:238px;top:176px;width:96px;height:3px;background:#3f80ef"></div>
<div class="t" style="z-index:2;left:343.5px;top:120px;font-size:21px;transform:scaleX(0.925);color:#c8c8c8">BP<span style="position:relative;top:-2px">_</span>NotPlaceable</div>
<svg class="a" style="z-index:2;left:237px;top:82px" width="97" height="94" viewBox="0 0 97 94"><defs><radialGradient id="g3" cx="52.74" cy="34.19" r="38.34" fx="52.74" fy="34.19" gradientUnits="userSpaceOnUse"><stop offset="0" stop-color="#ffffff"/><stop offset="0.1" stop-color="#e6e6e6"/><stop offset="0.42" stop-color="#a4a4a4"/><stop offset="0.72" stop-color="#7a7a7a"/><stop offset="0.92" stop-color="#5e5e5e"/><stop offset="1" stop-color="#565656"/></radialGradient><linearGradient id="g3w" x1="0" y1="0" x2="0" y2="1"><stop offset="0" stop-color="#9a9a9a"/><stop offset="1" stop-color="#f4f4f4"/></linearGradient></defs><polygon points="21.88,57.66 12.07,76.83 17.21,76.83" fill="url(#g3w)"/><polygon points="76.02,57.66 86.31,76.83 81.16,76.83" fill="url(#g3w)"/><polygon points="12.07,75.70 86.31,75.70 86.31,77.48 12.07,77.48" fill="#ececec"/><polygon points="12.07,77.48 86.31,77.48 86.31,87.11 12.07,87.11" fill="#bfbfbf"/><circle cx="49.00" cy="39.80" r="30.86" fill="url(#g3)"/></svg>
<!-- bars -->
<div class="a" style="left:0;top:181px;width:861px;height:46px;background:#151515"></div>
<div class="a" style="left:0;top:227px;width:861px;height:52px;background:#242424"></div>
<div class="a" style="left:0;top:279px;width:861px;height:3px;background:#191919"></div>
<!-- breadcrumb -->
<div class="t" style="left:3px;top:241.2px;font-size:21px;transform:scaleX(0.97);color:#c4c4c4">All</div>
<div class="t" style="left:77px;top:241.2px;font-size:21px;transform:scaleX(0.93);color:#c4c4c4">Content</div>
<div class="t" style="left:197.5px;top:241.2px;font-size:21px;transform:scaleX(0.93);color:#c4c4c4">Class</div>
<div class="t" style="left:298px;top:241.2px;font-size:21px;transform:scaleX(0.93);color:#c4c4c4">Behavior</div>
<svg class="a" style="left:0;top:227px" width="300" height="52" viewBox="0 0 300 52"><g fill="#c4c4c4" stroke="#c4c4c4" stroke-width="0.5" stroke-linejoin="round"><polygon points="46.8,20.6 49.0,18.8 56.4,26.0 49.0,33.2 46.8,31.4 52.2,26.0"/><polygon points="167.6,20.6 169.8,18.8 177.2,26.0 169.8,33.2 167.6,31.4 173.0,26.0"/><polygon points="267.8,20.6 270.0,18.8 277.4,26.0 270.0,33.2 267.8,31.4 273.2,26.0"/></g></svg>
<!-- left panel -->
<div class="a" style="left:0;top:282px;width:18px;height:458px;background:#242424"></div>
<div class="a" style="left:0;top:288px;width:12px;height:44px;background:#2d2d2d"></div>
<div class="a" style="left:0;top:332px;width:12px;height:3px;background:#1b1b1b"></div>
<div class="a" style="left:0;top:335px;width:12px;height:39px;background:#2c2c2c"></div>
<div class="a" style="left:0;top:374px;width:12px;height:366px;background:#1d1d1d"></div>
<div class="a" style="left:0;top:377px;width:9px;height:52px;background:#2e3540"></div>
<div class="a" style="left:0;top:477px;width:9px;height:24px;background:#313945"></div>
<div class="a" style="left:0;top:501px;width:9px;height:24px;background:#4a5a6f"></div>
<div class="a" style="left:18px;top:282px;width:3px;height:458px;background:#161616"></div>
<!-- filter icon -->
<svg class="a" style="left:30px;top:290px" width="60" height="32" viewBox="0 0 60 32">
<g stroke="#c8c8c8" stroke-width="2.8" stroke-linecap="round" fill="none">
<path d="M9.1,10.3 L28.6,10.3"/><path d="M14.2,18.1 L24.0,18.1"/><path d="M16.8,25.4 L21.4,25.4"/>
<path d="M39.6,14.4 L45.8,20.6 L52.0,14.4" stroke-width="2.5" stroke-linecap="butt"/>
</g></svg>
<!-- search -->
<div class="a" style="left:99px;top:291px;width:750px;height:34px;border-radius:17px;background:#101010;border:2px solid #373737"></div>
<svg class="a" style="left:100px;top:292px" width="40" height="32" viewBox="0 0 40 32">
<g stroke="#c8c8c8" stroke-width="2.4" fill="none" stroke-linecap="round">
<circle cx="15.1" cy="14" r="8"/><path d="M21,19.5 L27.2,25.8"/>
</g></svg>
<div class="t" style="left:141px;top:294.5px;font-size:20.9px;transform:scaleX(0.923);color:#5f5f5f">Search Behavior</div>
<svg class="a" style="left:810px;top:295px" width="36" height="26" viewBox="0 0 36 26">
<path d="M12.3,10.8 L18,16.4 L23.7,10.8" stroke="#d0d0d0" stroke-width="2.9" fill="none" stroke-linecap="round"/>
</svg>
<!-- tile 1 -->
<div class="a" style="left:33px;top:334px;width:237px;height:380px;border-radius:5px;box-shadow:3px 3px 6px rgba(0,0,0,.75)"></div>
<div class="a" style="left:33px;top:334px;width:237px;height:240px;border-radius:5px 5px 0 0;background:#1c1c1c;border:2px solid #0b5fc6;border-bottom:none"></div>
<div class="a" style="left:35px;top:568px;width:233px;height:3px;background:#4a8bf6"></div>
<div class="a" style="left:33px;top:571px;width:237px;height:143px;border-radius:0 0 5px 5px;background:#0070e0"></div>
<div class="t" style="left:38.5px;top:582px;font-size:17.7px;transform:scaleX(0.985);color:#ffffff">BP<span style="position:relative;top:-2px">_</span>NotPlaceable</div>
<div class="t" style="left:39px;top:680.5px;font-size:15.5px;transform:scaleX(0.915);color:#f2f2f2">Blueprint Class</div>
<svg class="a" style="left:35px;top:336px" width="233" height="232" viewBox="0 0 233 232"><defs><radialGradient id="g1" cx="120.70" cy="101.00" r="41.00" fx="120.70" fy="101.00" gradientUnits="userSpaceOnUse"><stop offset="0" stop-color="#ffffff"/><stop offset="0.1" stop-color="#e6e6e6"/><stop offset="0.42" stop-color="#a4a4a4"/><stop offset="0.72" stop-color="#7a7a7a"/><stop offset="0.92" stop-color="#5e5e5e"/><stop offset="1" stop-color="#565656"/></radialGradient><linearGradient id="g1w" x1="0" y1="0" x2="0" y2="1"><stop offset="0" stop-color="#9a9a9a"/><stop offset="1" stop-color="#f4f4f4"/></linearGradient></defs><polygon points="87.70,126.10 77.20,146.60 82.70,146.60" fill="url(#g1w)"/><polygon points="145.60,126.10 156.60,146.60 151.10,146.60" fill="url(#g1w)"/><polygon points="77.20,145.40 156.60,145.40 156.60,147.30 77.20,147.30" fill="#ececec"/><polygon points="77.20,147.30 156.60,147.30 156.60,157.60 77.20,157.60" fill="#bfbfbf"/><circle cx="116.70" cy="107.00" r="33.00" fill="url(#g1)"/></svg>
<!-- tile 2 -->
<div class="a" style="left:284px;top:334px;width:238px;height:380px;border-radius:5px;box-shadow:3px 3px 6px rgba(0,0,0,.75)"></div>
<div class="a" style="left:284px;top:334px;width:238px;height:234px;border-radius:5px 5px 0 0;background:#1c1c1c"></div>
<div class="a" style="left:284px;top:568px;width:238px;height:3px;background:#4a8bf6"></div>
<div class="a" style="left:284px;top:571px;width:238px;height:143px;border-radius:0 0 5px 5px;background:#383838"></div>
<div class="t" style="left:289.5px;top:582px;font-size:17.7px;transform:scaleX(0.985);color:#c8c8c8">BP<span style="position:relative;top:-2px">_</span>Placeable</div>
<div class="t" style="left:290px;top:680.5px;font-size:15.5px;transform:scaleX(0.915);color:#8a8a8a">Blueprint Class</div>
<svg class="a" style="left:286px;top:336px" width="233" height="232" viewBox="0 0 233 232"><defs><radialGradient id="g2" cx="122.00" cy="101.00" r="41.00" fx="122.00" fy="101.00" gradientUnits="userSpaceOnUse"><stop offset="0" stop-color="#ffffff"/><stop offset="0.1" stop-color="#e6e6e6"/><stop offset="0.42" stop-color="#a4a4a4"/><stop offset="0.72" stop-color="#7a7a7a"/><stop offset="0.92" stop-color="#5e5e5e"/><stop offset="1" stop-color="#565656"/></radialGradient><linearGradient id="g2w" x1="0" y1="0" x2="0" y2="1"><stop offset="0" stop-color="#9a9a9a"/><stop offset="1" stop-color="#f4f4f4"/></linearGradient></defs><polygon points="89.00,126.10 78.50,146.60 84.00,146.60" fill="url(#g2w)"/><polygon points="146.90,126.10 157.90,146.60 152.40,146.60" fill="url(#g2w)"/><polygon points="78.50,145.40 157.90,145.40 157.90,147.30 78.50,147.30" fill="#ececec"/><polygon points="78.50,147.30 157.90,147.30 157.90,157.60 78.50,157.60" fill="#bfbfbf"/><circle cx="118.00" cy="107.00" r="33.00" fill="url(#g2)"/></svg>
</body></html>
